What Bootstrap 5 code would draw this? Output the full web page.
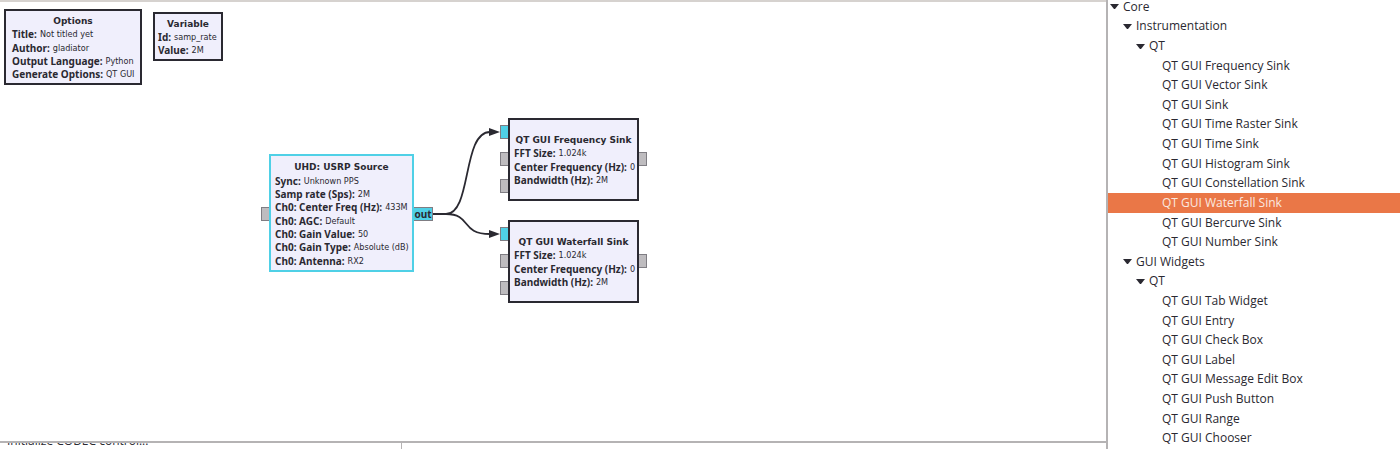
<!DOCTYPE html>
<html lang="en">
<head>
<meta charset="utf-8">
<meta name="viewport" content="width=device-width, initial-scale=1">
<title>Flow graph editor</title>
<link rel="stylesheet" href="https://cdn.jsdelivr.net/npm/bootstrap@5.3.0/dist/css/bootstrap.min.css">
<style>
  :root { --ink: #2a2931; --line: #b5b3b4; --cyan: #4fd0e6; --node: #f0effc; --orange: #ea7747; }
  body { color: var(--ink); background: #fff; font: 12px/16px "Open Sans", "Noto Sans", sans-serif; }
  .workspace { border-top: 2px solid #d6d2cf; min-width: 0; }
  .console { height: 8px; border-top: 2px solid var(--line); }
  .console-log { flex: 0 0 402px; border-right: 1px solid var(--line); padding-left: 7px; }
  .console-log span { display: block; margin-top: -10px; }

  /* flow graph nodes, placed on the free canvas */
  .block { position: absolute; display: flex; flex-direction: column; padding: 2px 4px;
    border: 2px solid var(--ink); background: var(--node); font: 9px/13px "DejaVu Sans Condensed", "DejaVu Sans", sans-serif; }
  .block > * { flex: 1 1 0; min-height: 0; margin: 0; white-space: nowrap; display: flex; align-items: center; }
  .block h2 { justify-content: center; padding-top: 2px; font: bold 9px/13px "DejaVu Sans", sans-serif; }
  .block b { font: bold 10px/13px "Noto Sans", sans-serif; margin-right: 3px; }
  .options { left: 4px; top: 7px; width: 138px; height: 76px; padding: 2px 6px; }
  .variable { left: 153px; top: 10px; width: 70px; height: 49px; padding: 2px 3px; }
  .source { left: 269px; top: 152px; width: 145px; height: 118px; padding: 3px 4px 2px; border-color: var(--cyan); }
  .sink { left: 508px; width: 131px; height: 83px; padding: 12px 4px; }
  .sink-a { top: 116px; }
  .sink-b { top: 218px; }
  .port { position: absolute; width: 9px; height: 14px; border: 1px solid #7f7d83; background: #bebcbf; }
  .port-on { background: var(--cyan); }
  .port-out { width: 20px; font: bold 10px/13px "Noto Sans", sans-serif; text-align: center; }
  .wires { position: absolute; left: 0; top: -2px; }

  .library { flex: 0 0 294px; border-left: 2px solid var(--line); }
  .tree { height: calc(100vh + 2px); margin-top: -3px; }
  .tree li { flex: 1 1 0; min-height: 19px; display: flex; align-items: center; white-space: nowrap; padding-left: 2px; }
  .tree svg { width: 9px; height: 5px; margin-right: 4px; fill: var(--ink); }
  .tree .lv2 { padding-left: 15px; }
  .tree .lv3 { padding-left: 28px; }
  .tree .lv4 { padding-left: 54px; }
  .tree .picked { background: var(--orange); color: #fbe9e0; }
</style>
</head>
<body>
<div class="d-flex vh-100 overflow-hidden">
  <main class="workspace d-flex flex-column flex-fill">
    <section class="position-relative flex-fill overflow-hidden" aria-label="Flow graph">
      <svg class="wires" width="660" height="320" fill="none" stroke="#2a2931" stroke-width="1.8" aria-hidden="true">
        <path d="M433 214H446C472 214 462 132 490 132M446 214C472 214 460 234 490 234"/>
        <path d="M489 128L500 132L489 136ZM489 230L500 234L489 238Z" fill="#2a2931" stroke="none"/>
      </svg>

      <article class="block options">
        <h2>Options</h2>
        <div><b>Title:</b>Not titled yet</div>
        <div><b>Author:</b>gladiator</div>
        <div><b>Output Language:</b>Python</div>
        <div><b>Generate Options:</b>QT GUI</div>
      </article>

      <article class="block variable">
        <h2>Variable</h2>
        <div><b>Id:</b>samp_rate</div>
        <div><b>Value:</b>2M</div>
      </article>

      <span class="port" style="left:261px;top:205px"></span>
      <span class="port port-on port-out" style="left:413px;top:205px">out</span>
      <article class="block source">
        <h2>UHD: USRP Source</h2>
        <div><b>Sync:</b>Unknown PPS</div>
        <div><b>Samp rate (Sps):</b>2M</div>
        <div><b>Ch0: Center Freq (Hz):</b>433M</div>
        <div><b>Ch0: AGC:</b>Default</div>
        <div><b>Ch0: Gain Value:</b>50</div>
        <div><b>Ch0: Gain Type:</b>Absolute (dB)</div>
        <div><b>Ch0: Antenna:</b>RX2</div>
      </article>

      <span class="port port-on" style="left:500px;top:123px"></span>
      <span class="port" style="left:500px;top:150px"></span>
      <span class="port" style="left:500px;top:177px"></span>
      <span class="port" style="left:638px;top:150px"></span>
      <article class="block sink sink-a">
        <h2>QT GUI Frequency Sink</h2>
        <div><b>FFT Size:</b>1.024k</div>
        <div><b>Center Frequency (Hz):</b>0</div>
        <div><b>Bandwidth (Hz):</b>2M</div>
      </article>

      <span class="port port-on" style="left:500px;top:225px"></span>
      <span class="port" style="left:500px;top:252px"></span>
      <span class="port" style="left:500px;top:279px"></span>
      <span class="port" style="left:638px;top:252px"></span>
      <article class="block sink sink-b">
        <h2>QT GUI Waterfall Sink</h2>
        <div><b>FFT Size:</b>1.024k</div>
        <div><b>Center Frequency (Hz):</b>0</div>
        <div><b>Bandwidth (Hz):</b>2M</div>
      </article>
    </section>
    <footer class="console d-flex overflow-hidden">
      <div class="console-log"><span>Initialize CODEC control...</span></div>
    </footer>
  </main>

  <aside class="library overflow-hidden" aria-label="Block library">
    <ul class="tree list-unstyled d-flex flex-column mb-0">
      <li><svg viewBox="0 0 9 5"><path d="M0 0H9L5 5H4Z"/></svg>Core</li>
      <li class="lv2"><svg viewBox="0 0 9 5"><path d="M0 0H9L5 5H4Z"/></svg>Instrumentation</li>
      <li class="lv3"><svg viewBox="0 0 9 5"><path d="M0 0H9L5 5H4Z"/></svg>QT</li>
      <li class="lv4">QT GUI Frequency Sink</li>
      <li class="lv4">QT GUI Vector Sink</li>
      <li class="lv4">QT GUI Sink</li>
      <li class="lv4">QT GUI Time Raster Sink</li>
      <li class="lv4">QT GUI Time Sink</li>
      <li class="lv4">QT GUI Histogram Sink</li>
      <li class="lv4">QT GUI Constellation Sink</li>
      <li class="lv4 picked" aria-current="true">QT GUI Waterfall Sink</li>
      <li class="lv4">QT GUI Bercurve Sink</li>
      <li class="lv4">QT GUI Number Sink</li>
      <li class="lv2"><svg viewBox="0 0 9 5"><path d="M0 0H9L5 5H4Z"/></svg>GUI Widgets</li>
      <li class="lv3"><svg viewBox="0 0 9 5"><path d="M0 0H9L5 5H4Z"/></svg>QT</li>
      <li class="lv4">QT GUI Tab Widget</li>
      <li class="lv4">QT GUI Entry</li>
      <li class="lv4">QT GUI Check Box</li>
      <li class="lv4">QT GUI Label</li>
      <li class="lv4">QT GUI Message Edit Box</li>
      <li class="lv4">QT GUI Push Button</li>
      <li class="lv4">QT GUI Range</li>
      <li class="lv4">QT GUI Chooser</li>
    </ul>
  </aside>
</div>
<script src="https://cdn.jsdelivr.net/npm/bootstrap@5.3.0/dist/js/bootstrap.bundle.min.js"></script>
</body>
</html>
